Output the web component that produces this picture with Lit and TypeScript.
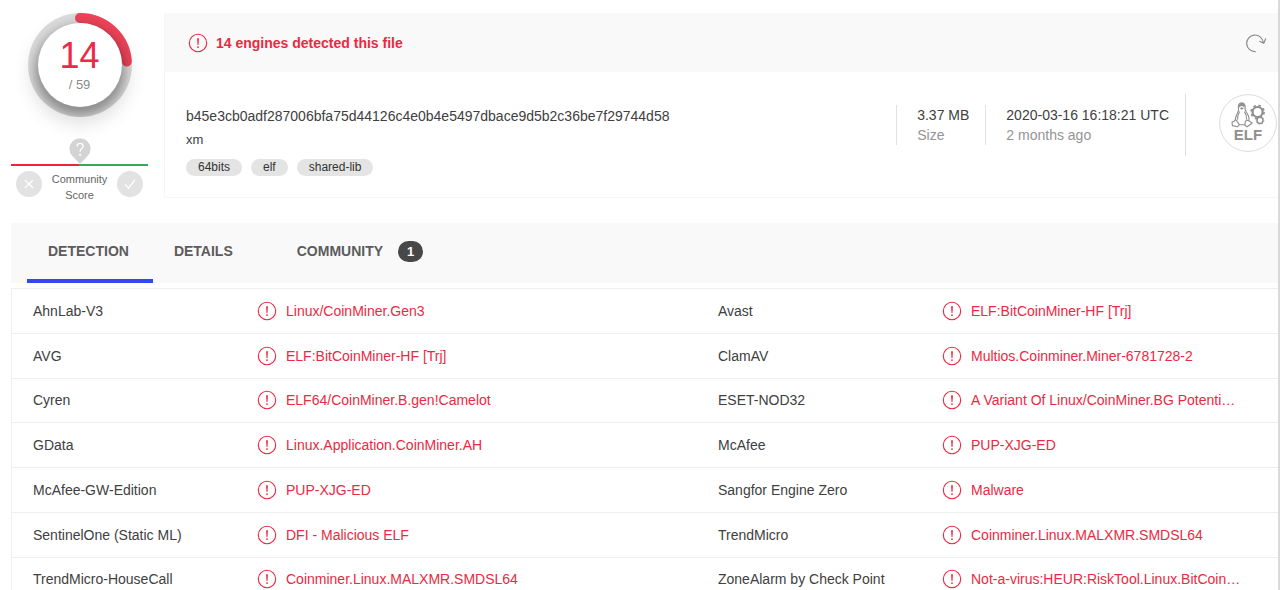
import { LitElement, html, css, svg } from "lit";
import { customElement, property } from "lit/decorators.js";

type Finding = [engine: string, result: string];

const FINDINGS: [Finding, Finding][] = [
  [["AhnLab-V3", "Linux/CoinMiner.Gen3"], ["Avast", "ELF:BitCoinMiner-HF [Trj]"]],
  [["AVG", "ELF:BitCoinMiner-HF [Trj]"], ["ClamAV", "Multios.Coinminer.Miner-6781728-2"]],
  [["Cyren", "ELF64/CoinMiner.B.gen!Camelot"], ["ESET-NOD32", "A Variant Of Linux/CoinMiner.BG Potenti…"]],
  [["GData", "Linux.Application.CoinMiner.AH"], ["McAfee", "PUP-XJG-ED"]],
  [["McAfee-GW-Edition", "PUP-XJG-ED"], ["Sangfor Engine Zero", "Malware"]],
  [["SentinelOne (Static ML)", "DFI - Malicious ELF"], ["TrendMicro", "Coinminer.Linux.MALXMR.SMDSL64"]],
  [["TrendMicro-HouseCall", "Coinminer.Linux.MALXMR.SMDSL64"], ["ZoneAlarm by Check Point", "Not-a-virus:HEUR:RiskTool.Linux.BitCoin…"]],
];

const alertIcon = html`<svg class="alert" viewBox="0 0 20 20" width="20" height="20" aria-hidden="true">
  <circle cx="10" cy="10" r="8.7" fill="none" stroke="currentColor" stroke-width="1.1" />
  <path d="M9.1 5.3h1.8l-.4 6.6h-1z" fill="currentColor" />
  <circle cx="10" cy="14.1" r="0.95" fill="currentColor" />
</svg>`;

@customElement("score-ring")
class ScoreRing extends LitElement {
  @property({ type: Number }) hits = 0;
  @property({ type: Number }) total = 1;

  static styles = css`
    :host { display: grid; place-items: center; }
    svg { display: block; grid-area: 1 / 1; overflow: visible; }
    .text { grid-area: 1 / 1; display: flex; flex-direction: column; align-items: center; z-index: 1; padding-top: 2px; }
    .hits { font-size: 36px; line-height: 38px; color: #eb2a45; }
    .total { font-size: 13px; line-height: 20px; color: #8a8a8a; }
  `;

  render() {
    const length = 2 * Math.PI * 47;
    const arc = (this.hits / this.total) * length;
    return html`
      <svg width="104" height="104" viewBox="0 0 104 104" aria-hidden="true">
        <defs>
          <filter id="soft" x="-50%" y="-50%" width="200%" height="200%"><feGaussianBlur stdDeviation="10" /></filter>
          <filter id="inner" x="-40%" y="-40%" width="180%" height="180%"><feGaussianBlur stdDeviation="6" /></filter>
          <clipPath id="disc"><circle cx="52" cy="52" r="52" /></clipPath>
        </defs>
        <circle cx="52" cy="61" r="48" fill="#000" opacity="0.14" filter="url(#soft)" />
        <circle cx="52" cy="52" r="52" fill="#dadada" />
        ${svg`<circle cx="52" cy="52" r="47" fill="none" stroke="#ec4358" stroke-width="10" stroke-linecap="round"
          stroke-dasharray="${arc} ${length}" transform="rotate(-90 52 52)" />`}
        <g clip-path="url(#disc)"><circle cx="52" cy="58" r="45" fill="#000" opacity="0.36" filter="url(#inner)" /></g>
        <circle cx="52" cy="52" r="42" fill="#fff" />
      </svg>
      <div class="text"><span class="hits">${this.hits}</span><span class="total">/ ${this.total}</span></div>
    `;
  }
}

@customElement("community-score")
class CommunityScore extends LitElement {
  static styles = css`
    :host { display: flex; flex-direction: column; align-items: center; }
    .pin { display: block; }
    .bar { align-self: stretch; height: 2px; background: linear-gradient(to right, #ee2240 50%, #33ab5f 50%); }
    .votes { align-self: stretch; display: flex; justify-content: space-between; padding: 5px 5px 0; }
    .label { font-size: 11px; line-height: 16px; color: #666; text-align: center; width: min-content; }
    button { width: 26px; height: 26px; padding: 0; border: 0; border-radius: 50%; background: #e2e2e2; }
    button svg { display: block; }
  `;

  render() {
    return html`
      <svg class="pin" width="22" height="26" viewBox="0 0 22 26" aria-hidden="true">
        <path d="M11 26 3.3 18.1A10.6 10.6 0 1 1 18.7 18.1Z" fill="#d4d4d4" />
        <path d="M8.1 8.4c0-1.9 1.2-3 3-3s3 1.1 3 2.8c0 2.3-3 2.5-3 5.6" fill="none" stroke="#fff" stroke-width="1.3" />
        <circle cx="11.1" cy="16.8" r="1.1" fill="#fff" />
      </svg>
      <div class="bar"></div>
      <div class="votes">
        <button aria-label="Vote malicious"><svg width="26" height="26" viewBox="0 0 26 26"><path d="M9 9l8 8M17 9l-8 8" fill="none" stroke="#fff" stroke-width="1.3" /></svg></button>
        <span class="label">Community Score</span>
        <button aria-label="Vote harmless"><svg width="26" height="26" viewBox="0 0 26 26"><path d="M8 13.4l3.6 3.8L18 8.6" fill="none" stroke="#fff" stroke-width="1.3" /></svg></button>
      </div>
    `;
  }
}

@customElement("app-root")
class AppRoot extends LitElement {
  static styles = css`
    :host {
      display: block; box-sizing: border-box; height: 100vh; overflow: hidden;
      border-right: 2px solid #d9d9d9; background: #fff;
      font-family: "Liberation Sans", Arial, sans-serif; font-size: 14px; line-height: 20px; color: #404040;
    }
    .summary { display: flex; gap: 16px; padding: 13px 0 0 11px; }
    .score { flex: 0 0 137px; display: flex; flex-direction: column; align-items: center; gap: 21px; }
    community-score { align-self: stretch; }
    .card { flex: 1; align-self: flex-start; box-sizing: border-box; border: 1px solid #f6f6f6; border-width: 0 0 1px 1px; }
    .alert { flex: none; display: block; }
    .headline { display: flex; align-items: center; gap: 8px; height: 59px; padding: 0 11px 0 23px; background: #f9f9f9; color: #ea2942; }
    .headline h1 { margin: 0; font-size: 14px; flex: 1; }
    .refresh { border: 0; padding: 0; background: none; }
    .refresh svg { display: block; }
    .file { display: flex; align-items: flex-start; padding: 22px 0 21px 21px; }
    .identity { flex: 1; padding-top: 10px; }
    .hash, .name { line-height: 24px; }
    .name { font-size: 13px; }
    .tags { display: flex; gap: 9px; list-style: none; margin: 7px 0 0; padding: 0; }
    .tags li { font-size: 12px; line-height: 17px; padding: 0 12px; border-radius: 9px; background: #e4e4e4; color: #333; }
    .fact { margin-top: 11px; padding: 0 16px 0 20px; border-left: 1px solid #e2e2e2; }
    .fact small { display: block; font-size: 14px; color: #949494; }
    .type { border-left: 1px solid #dedede; padding: 0 1px 4px 33px; }
    .type svg { display: block; }
    .elf { font: bold 15px "Liberation Sans", Arial, sans-serif; fill: #8f8f8f; }
    nav { display: flex; margin: 20px 0 0 11px; padding-left: 16px; height: 60px; background: #f9f9f9; }
    nav a { display: flex; align-items: center; box-sizing: border-box; padding: 0 24px 0 21px; border-bottom: 4px solid transparent; font-weight: bold; color: #5c5c5c; text-decoration: none; }
    nav a.active { border-color: #3049f2; }
    nav a.community { padding-left: 40px; gap: 15px; }
    .count { min-width: 25px; border-radius: 11px; line-height: 21px; font-size: 13px; text-align: center; background: #484848; color: #fff; }
    .results { margin: 5px 0 0 11px; border-left: 1px solid #f0f0f0; }
    table { width: 100%; height: 313px; border-collapse: collapse; table-layout: fixed; }
    td, th { padding: 0; border-top: 1px solid #eee; text-align: left; font-weight: normal; white-space: nowrap; }
    th { padding-left: 21px; }
    .engine { width: 245px; }
    .result { width: 440px; }
    .finding { display: flex; align-items: center; gap: 9px; color: #ea2942; }
  `;

  render() {
    return html`
      <section class="summary">
        <div class="score">
          <score-ring hits="14" total="59"></score-ring>
          <community-score></community-score>
        </div>
        <div class="card">
          <header class="headline">
            ${alertIcon}
            <h1>14 engines detected this file</h1>
            <button class="refresh" aria-label="Reanalyze">
              <svg width="22" height="20" viewBox="0 0 22 20"><path d="M10.6 18.6A8.3 8.3 0 1 1 18.2 9.4M14.4 8.2l4.4 2 2-4.6" fill="none" stroke="#888" stroke-width="1.2" /></svg>
            </button>
          </header>
          <div class="file">
            <div class="identity">
              <div class="hash">b45e3cb0adf287006bfa75d44126c4e0b4e5497dbace9d5b2c36be7f29744d58</div>
              <div class="name">xm</div>
              <ul class="tags"><li>64bits</li><li>elf</li><li>shared-lib</li></ul>
            </div>
            <div class="fact">3.37 MB<small>Size</small></div>
            <div class="fact">2020-03-16 16:18:21 UTC<small>2 months ago</small></div>
            <div class="type">
              <svg width="58" height="58" viewBox="0 0 58 58" role="img" aria-label="ELF">
                <circle cx="29" cy="29" r="28.4" fill="#fff" stroke="#dcdcdc" />
                <g fill="none" stroke="#8f8f8f" stroke-width="1.1" stroke-linejoin="round">
                  <path d="M19.6 15.6c-.9-3.6.1-6.8 3.1-6.8s4 2.8 3.3 6.4c.6 2.8 3.8 5.2 4 9.4.1 2.6-1.2 5.8-4.4 6.2h-4.8c-3.2-.2-4.7-2.8-4.4-5.8.3-3.8 2.8-6 3.2-9.4z" />
                  <path d="M20.6 17.6c-1.6 3-2.4 5-2 8M25.4 17.6c1.8 2.6 2.6 5 2.2 8" />
                  <path d="M16.6 25.4l-1.6 2-2 .6.4 3.6 5 1.2 2-2.2zM28.4 26.2l2.6 1.4 2.2 1.4-2.6 2-2.4 1.8-2.4-1.6.6-4z" fill="#fff" />
                </g>
                <path d="M20 10.6c1-2.2 4.8-2.2 5.6 0l.2 2.6h-1.2l-.4-1.2-1 .2-.6 0-1-.2-.4 1.2h-1.2zM20.8 14.2l2-1 2 1-1.8 1.6z" fill="#8f8f8f" />
                <circle cx="38.6" cy="18" r="5" fill="none" stroke="#8f8f8f" stroke-width="2.2" />
                <circle cx="38.6" cy="18" r="6.5" fill="none" stroke="#8f8f8f" stroke-width="1.6" stroke-dasharray="2.55 2.55" />
                <circle cx="41" cy="26.4" r="3" fill="#fff" stroke="#8f8f8f" stroke-width="1.4" />
                <circle cx="41" cy="26.4" r="3.9" fill="none" stroke="#8f8f8f" stroke-width="0.8" stroke-dasharray="1.5 1.5" />
                <text class="elf" x="29" y="46" text-anchor="middle">ELF</text>
              </svg>
            </div>
          </div>
        </div>
      </section>
      <nav>
        <a class="active" href="#detection">DETECTION</a>
        <a href="#details">DETAILS</a>
        <a class="community" href="#community">COMMUNITY <span class="count">1</span></a>
      </nav>
      <div class="results">
        <table>
          <colgroup><col class="engine" /><col class="result" /><col class="engine" /><col /></colgroup>
          <tbody>
            ${FINDINGS.map((pair) => html`<tr>${pair.map(([engine, result]) => html`
              <th scope="row">${engine}</th>
              <td><div class="finding">${alertIcon}<span>${result}</span></div></td>`)}</tr>`)}
          </tbody>
        </table>
      </div>
    `;
  }
}
